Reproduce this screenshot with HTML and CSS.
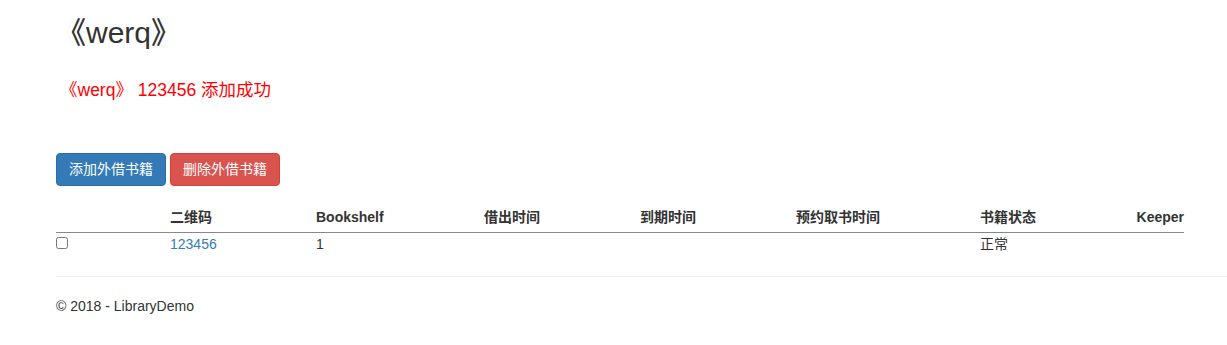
FILE: index.html
```html
<!DOCTYPE html>
<html lang="zh-CN">
<head>
  <meta charset="UTF-8">
  <meta name="viewport" content="width=device-width, initial-scale=1.0">
  <title>《werq》 - LibraryDemo</title>
  <link rel="stylesheet" href="styles.css">
</head>
<body>
  <div class="container">
    <h2 class="title">《werq》</h2>
    <p class="message">《werq》 123456 添加成功</p>

    <div class="actions">
      <button class="btn btn-primary">添加外借书籍</button>
      <button class="btn btn-danger">删除外借书籍</button>
    </div>

    <table class="books">
      <colgroup>
        <col style="width: 114px">
        <col style="width: 146px">
        <col style="width: 168px">
        <col style="width: 156px">
        <col style="width: 156px">
        <col style="width: 184px">
        <col style="width: 156px">
        <col>
      </colgroup>
      <thead>
        <tr>
          <th></th>
          <th>二维码</th>
          <th>Bookshelf</th>
          <th>借出时间</th>
          <th>到期时间</th>
          <th>预约取书时间</th>
          <th>书籍状态</th>
          <th class="last">Keeper</th>
        </tr>
      </thead>
      <tbody>
        <tr>
          <td><input type="checkbox"></td>
          <td><a href="#">123456</a></td>
          <td>1</td>
          <td></td>
          <td></td>
          <td></td>
          <td>正常</td>
          <td></td>
        </tr>
      </tbody>
    </table>

    <hr>
    <footer>
      <p>© 2018 - LibraryDemo</p>
    </footer>
  </div>
</body>
</html>
```

FILE: styles.css
```css
body {
  margin: 0;
  font-family: 'Liberation Sans', 'Noto Sans CJK SC', sans-serif;
  font-size: 14px;
  line-height: 20px;
  color: #333;
  background: #fff;
}
.container {
  padding: 0 43px 0 56px;
}
.title {
  margin: 16px 0 0;
  font-size: 30px;
  line-height: 33px;
  font-weight: 500;
}
.message {
  margin: 29px 0 0 4px;
  font-size: 17.5px;
  line-height: 24px;
  color: #f00;
}
.actions {
  display: flex;
  gap: 4px;
  margin-top: 51px;
}
.btn {
  font-family: inherit;
  font-size: 14px;
  line-height: 19px;
  padding: 6px 12px;
  border: 1px solid transparent;
  border-radius: 4px;
  color: #fff;
  cursor: pointer;
}
.btn-primary {
  background-color: #337ab7;
  border-color: #2e6da4;
}
.btn-danger {
  background-color: #d9534f;
  border-color: #d43f3a;
}
.books {
  width: 100%;
  margin-top: 13px;
  border-collapse: collapse;
  table-layout: fixed;
}
.books th {
  text-align: left;
  font-weight: bold;
  padding: 8px 0 5px;
  border-bottom: 1px solid #888;
  white-space: nowrap;
}
.books th.last {
  text-align: right;
}
.books td {
  padding: 0;
  height: 20px;
}
.books input {
  margin: 4px 0 0;
  width: 12px;
  height: 12px;
}
.books a {
  color: #337ab7;
  text-decoration: none;
}
hr {
  margin: 22px -43px 0 0;
  border: 0;
  border-top: 1px solid #eee;
}
footer p {
  margin: 19px 0 0;
}
```
